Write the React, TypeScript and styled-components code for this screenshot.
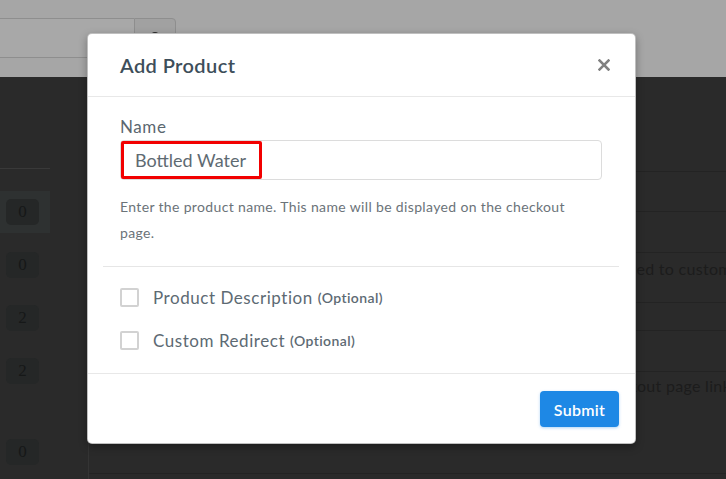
import styled, { createGlobalStyle } from "styled-components"

const GlobalStyle = createGlobalStyle`
  html, body {
    margin: 0;
    padding: 0;
    background: #2a2a2a;
  }
  * { box-sizing: border-box; }
`

const counts = ['0', '0', '2', '2']

export default function App() {
  return (
    <>
      <GlobalStyle />
      <Page>
        <TopBand>
          <SearchBox />
          <SearchButton><SearchDot /></SearchButton>
        </TopBand>
        <Main>
          <CountColumn>
            <ColumnHead />
            {counts.map((c, i) => (
              <CountRow key={i} $active={i === 0}>
                <Badge>{c}</Badge>
              </CountRow>
            ))}
            <CountRow $gap={39}>
              <Badge>0</Badge>
            </CountRow>
          </CountColumn>
          <Gutter />
          <Panel>
            <PanelHead />
            <PanelRow $h={40} />
            <PanelRow $h={41} />
            <PanelRow $h={50} $pad={6}>
              <DescCell>Displayed to customers</DescCell>
            </PanelRow>
            <PanelRow $h={28} />
            <PanelRow $h={41} />
            <PanelRow $h={102} $pad={4}>
              <DescCell $indent={9}>Checkout page link</DescCell>
            </PanelRow>
          </Panel>
        </Main>

        <Modal>
          <ModalHeader>
            <ModalTitle>Add Product</ModalTitle>
            <CloseButton aria-label="close">
              <svg width="12" height="12" viewBox="0 0 12 12">
                <path d="M1.5 1.5 L10.5 10.5 M10.5 1.5 L1.5 10.5" stroke="#808080" strokeWidth="2.5" strokeLinecap="square" />
              </svg>
            </CloseButton>
          </ModalHeader>
          <ModalBody>
            <NameBlock>
              <FieldLabel>Name</FieldLabel>
              <InputWrap>
                <TextInput defaultValue="Bottled Water" />
                <Highlight />
              </InputWrap>
              <HelpText>
                Enter the product name. This name will be displayed on the checkout page.
              </HelpText>
            </NameBlock>
            <Options>
              <OptionRow>
                <CheckBox />
                <OptionText>Product Description</OptionText>
                <Optional>(Optional)</Optional>
              </OptionRow>
              <OptionRow>
                <CheckBox />
                <OptionText>Custom Redirect</OptionText>
                <Optional>(Optional)</Optional>
              </OptionRow>
            </Options>
          </ModalBody>
          <ModalFooter>
            <SubmitButton>Submit</SubmitButton>
          </ModalFooter>
        </Modal>
      </Page>
    </>
  )
}

const Page = styled.div`
  position: relative;
  width: 726px;
  height: 479px;
  overflow: hidden;
  background: #2a2a2a;
  font-family: Lato, "Open Sans", sans-serif;
`

const TopBand = styled.div`
  height: 77px;
  background: #a6a6a6;
  padding-top: 18px;
  display: flex;
  align-items: flex-start;
`

const SearchBox = styled.div`
  width: 134px;
  height: 40px;
  border-top: 1px solid #8e8e8e;
  border-bottom: 1px solid #8e8e8e;
  background: #a8a8a8;
`

const SearchButton = styled.div`
  width: 42px;
  height: 40px;
  border: 1px solid #8e8e8e;
  border-radius: 0 4px 4px 0;
  background: #a1a1a1;
  display: flex;
  justify-content: center;
`

const SearchDot = styled.div`
  width: 8px;
  height: 8px;
  margin-top: 13px;
  border-radius: 50%;
  background: #2b2b2b;
`

const Main = styled.div`
  display: flex;
  height: 402px;
`

const CountColumn = styled.div`
  width: 50px;
  flex-shrink: 0;
  display: flex;
  flex-direction: column;
`

const ColumnHead = styled.div`
  height: 92px;
  flex-shrink: 0;
  border-bottom: 1px solid #393939;
`

const CountRow = styled.div<{ $active?: boolean; $gap?: number }>`
  height: 42px;
  flex-shrink: 0;
  margin-top: ${p => (p.$gap ?? (p.$active ? 22 : 11))}px;
  display: flex;
  align-items: center;
  padding-left: 6px;
  background: ${p => (p.$active ? '#2e3131' : 'transparent')};
`

const Badge = styled.div`
  width: 33px;
  height: 26px;
  flex-shrink: 0;
  border-radius: 5px;
  background: #252727;
  color: #161818;
  font-family: "Liberation Serif", serif;
  font-size: 17px;
  display: flex;
  align-items: center;
  justify-content: center;
`

const Gutter = styled.div`
  width: 38px;
  flex-shrink: 0;
`

const Panel = styled.div`
  flex: 1;
  min-width: 0;
  overflow: hidden;
  border-left: 1px solid #343434;
  display: flex;
  flex-direction: column;
`

const PanelHead = styled.div`
  height: 95px;
  flex-shrink: 0;
  border-bottom: 1px solid #232323;
`

const PanelRow = styled.div<{ $h: number; $pad?: number }>`
  height: ${p => p.$h}px;
  flex-shrink: 0;
  border-bottom: 1px solid #232323;
  padding-top: ${p => p.$pad ?? 0}px;
  padding-left: 494px;
`

const DescCell = styled.div<{ $indent?: number }>`
  margin-left: ${p => p.$indent ?? 0}px;
  white-space: nowrap;
  font-size: 16px;
  line-height: 20px;
  letter-spacing: 0.3px;
  color: #1c1c1c;
`

const Modal = styled.div`
  position: absolute;
  top: 33px;
  left: 87px;
  width: 549px;
  background: #fff;
  border: 1px solid rgba(0, 0, 0, 0.25);
  border-radius: 5px;
  box-shadow: 0 3px 9px rgba(0, 0, 0, 0.3);
  display: flex;
  flex-direction: column;
`

const ModalHeader = styled.div`
  height: 63px;
  display: flex;
  align-items: center;
  justify-content: space-between;
  padding: 0 25px 0 32px;
  border-bottom: 1px solid #e8e8e8;
`

const ModalTitle = styled.h4`
  margin: 0;
  font-size: 20px;
  font-weight: 600;
  letter-spacing: 0.4px;
  color: #3d4e5a;
`

const CloseButton = styled.button`
  border: 0;
  background: none;
  padding: 0;
  display: flex;
  cursor: pointer;
`

const ModalBody = styled.div`
  padding: 0 16px 0 15px;
`

const NameBlock = styled.div`
  padding: 20px 17px 20px 17px;
  border-bottom: 1px solid #e6e6e6;
`

const FieldLabel = styled.label`
  display: block;
  font-size: 17px;
  line-height: 20px;
  letter-spacing: 0.6px;
  color: #5b6770;
`

const InputWrap = styled.div`
  position: relative;
  margin-top: 3px;
`

const TextInput = styled.input`
  width: 100%;
  height: 40px;
  border: 1px solid #dcdcdc;
  border-radius: 4px;
  padding: 0 14px;
  font-family: Lato, sans-serif;
  font-size: 18px;
  color: #5e6a72;
  outline: none;
`

const Highlight = styled.div`
  position: absolute;
  top: 1px;
  left: 1px;
  width: 141px;
  height: 38px;
  border: 3px solid #f20000;
  border-radius: 2px;
  pointer-events: none;
`

const HelpText = styled.p`
  margin: 14px 0 0;
  max-width: 470px;
  font-size: 14px;
  line-height: 26px;
  letter-spacing: 0.35px;
  color: #6b7379;
`

const Options = styled.div`
  padding: 9px 17px 11px;
`

const OptionRow = styled.div`
  height: 43px;
  display: flex;
  align-items: center;
`

const CheckBox = styled.span`
  width: 19px;
  height: 19px;
  flex-shrink: 0;
  border: 2px solid #d2d2d2;
  border-radius: 2px;
  margin-right: 14px;
`

const OptionText = styled.span`
  font-size: 17px;
  letter-spacing: 0.55px;
  color: #5d6a73;
`

const Optional = styled.span`
  margin-left: 5px;
  font-size: 14px;
  font-weight: 600;
  letter-spacing: 0.4px;
  color: #5d6a73;
`

const ModalFooter = styled.div`
  border-top: 1px solid #e8e8e8;
  padding: 17px 16px 16px;
  display: flex;
  justify-content: flex-end;
`

const SubmitButton = styled.button`
  width: 79px;
  height: 36px;
  border: 0;
  border-radius: 4px;
  background: #1e88e5;
  color: #fff;
  font-family: Lato, sans-serif;
  font-size: 16px;
  font-weight: 600;
  letter-spacing: 0.3px;
  box-shadow: 0 1px 3px rgba(30, 136, 229, 0.35);
  cursor: pointer;
`
